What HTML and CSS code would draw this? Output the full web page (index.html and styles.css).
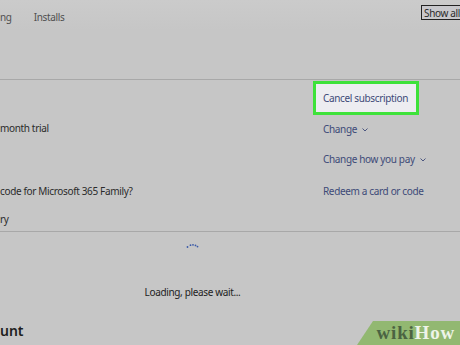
FILE: index.html
```html
<!DOCTYPE html>
<html lang="en">
<head>
  <meta charset="UTF-8" />
  <title>Services &amp; subscriptions</title>
  <link rel="stylesheet" href="styles.css">
</head>
<body>
  <header class="top">
    <nav class="tabs">
      <span class="tab">ng</span>
      <span class="tab">Installs</span>
    </nav>
    <button class="show-all" type="button">Show all</button>
  </header>

  <section class="details">
    <div class="cell left"></div>
    <div class="cell right"><a class="link cancel" href="#">Cancel subscription</a></div>

    <div class="cell left trial">month trial</div>
    <div class="cell right"><a class="link" href="#">Change <svg class="chev" width="6" height="4" viewBox="0 0 6 4"><path d="M0.5 0.5 L3 3 L5.5 0.5" fill="none" stroke="#3d4a78" stroke-width="0.9"/></svg></a></div>

    <div class="cell left"></div>
    <div class="cell right"><a class="link" href="#">Change how you pay <svg class="chev" width="6" height="4" viewBox="0 0 6 4"><path d="M0.5 0.5 L3 3 L5.5 0.5" fill="none" stroke="#3d4a78" stroke-width="0.9"/></svg></a></div>

    <div class="cell left">code for Microsoft 365 Family?</div>
    <div class="cell right"><a class="link" href="#">Redeem a card or code</a></div>

    <div class="cell left">ry</div>
    <div class="cell right"></div>
  </section>

  <section class="loading">
    <svg class="spinner" width="14" height="6" viewBox="0 0 14 6">
      <circle cx="1.5" cy="4" r="0.9" fill="#3a5aa8"/>
      <circle cx="4.5" cy="2.2" r="0.9" fill="#3a5aa8"/>
      <circle cx="7" cy="1.8" r="0.9" fill="#3a5aa8"/>
      <circle cx="9.5" cy="2.4" r="0.9" fill="#3a5aa8"/>
      <circle cx="11.5" cy="3.6" r="0.9" fill="#3a5aa8"/>
    </svg>
    <p class="loading-text">Loading, please wait...</p>
  </section>

  <h2 class="account">unt</h2>

  <div class="wikihow"><span class="wiki">wiki</span><span class="how">How</span></div>
</body>
</html>
```

FILE: styles.css
```css
body {
  margin: 0;
  width: 460px;
  height: 345px;
  overflow: hidden;
  position: relative;
  background-color: #c6c6c6;
  font-family: 'Noto Sans', 'Liberation Sans', sans-serif;
  font-size: 10px;
  letter-spacing: -0.35px;
  color: #2b2b2b;
}
.top {
  height: 79px;
  border-bottom: 1px solid #a8a8a8;
  display: flex;
  justify-content: space-between;
  align-items: flex-start;
  background: linear-gradient(#cbcbcb, #c6c6c6 30px);
}
.tabs {
  display: flex;
  gap: 22px;
  padding-top: 10px;
}
.tab {
  color: #505050;
}
.show-all {
  margin-top: 5px;
  margin-right: -3px;
  padding: 0 2px;
  height: 15px;
  font-family: inherit;
  font-size: 10px;
  letter-spacing: -0.35px;
  color: #2b2b2b;
  background: #c8c8cc;
  border: 1px solid #222;
}
.details {
  display: grid;
  grid-template-columns: 313px 1fr;
  grid-template-rows: 36px 26px 34px 30px 25px;
  border-bottom: 1px solid #a8a8a8;
}
.cell {
  display: flex;
  align-items: center;
}
.trial {
  padding-bottom: 3px;
}
.link {
  color: #3d4a78;
  text-decoration: none;
  padding-left: 10px;
}
.chev {
  margin-left: 3px;
  vertical-align: 1px;
}
.cancel {
  width: 106px;
  height: 34px;
  box-sizing: border-box;
  padding-left: 7px;
  display: flex;
  align-items: center;
  border: 3px solid #3ee23a;
  background-color: #ededf1;
}
.loading {
  height: 86px;
  display: flex;
  flex-direction: column;
  align-items: center;
  padding-right: 75px;
}
.spinner {
  margin-top: 11px;
}
.loading-text {
  margin: 36px 0 0;
  color: #222;
}
.account {
  margin: 3px 0 0;
  font-size: 14px;
  font-weight: 600;
  letter-spacing: 0;
  color: #1e1e1e;
}
.wikihow {
  position: absolute;
  right: 0;
  bottom: 0;
  width: 98px;
  height: 24px;
  padding-right: 5px;
  background-color: #92b871;
  clip-path: polygon(16px 0, 100% 0, 100% 100%, 0 100%);
  display: flex;
  align-items: center;
  justify-content: flex-end;
  font-family: 'Liberation Serif', serif;
  font-weight: bold;
  font-size: 19px;
  letter-spacing: 0.8px;
}
.wiki {
  color: #4b6342;
}
.how {
  color: #eef4e8;
}
```
